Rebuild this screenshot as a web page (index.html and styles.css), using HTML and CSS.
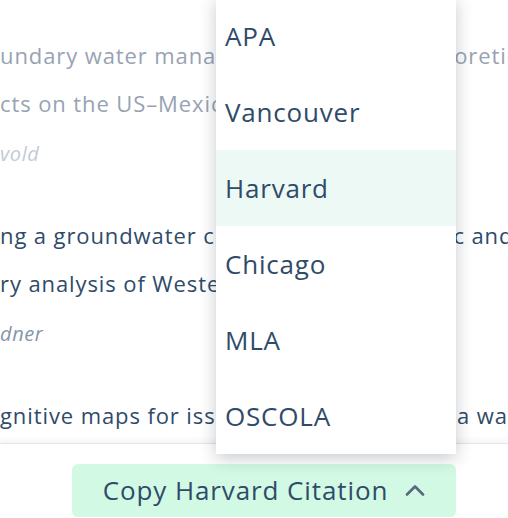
FILE: index.html
```html
<!DOCTYPE html>
<html lang="en">
<head>
<meta charset="utf-8">
<link rel="stylesheet" href="styles.css">
</head>
<body>
<div class="panel">
  <div class="results">
    <div class="entry entry-faded">
      <div class="line">undary water management: toward a theoretical</div>
      <div class="line">cts on the US–Mexico border</div>
      <div class="author">vold</div>
    </div>
    <div class="entry">
      <div class="line">ng a groundwater crisis: on hydrogeologic and</div>
      <div class="line">ry analysis of Western</div>
      <div class="author">dner</div>
    </div>
    <div class="entry">
      <div class="line">gnitive maps for issue framing in Bolivia: a water</div>
    </div>
  </div>
  <div class="footer">
    <div class="menu">
      <div class="option">APA</div>
      <div class="option">Vancouver</div>
      <div class="option option-active">Harvard</div>
      <div class="option">Chicago</div>
      <div class="option">MLA</div>
      <div class="option">OSCOLA</div>
    </div>
    <button class="copy-btn">
      <span>Copy Harvard Citation</span>
      <svg class="chev" width="20" height="12" viewBox="0 0 20 12"><path d="M2 10.5 L10 2.5 L18 10.5" fill="none" stroke="currentColor" stroke-width="2.6" stroke-linecap="round" stroke-linejoin="round"/></svg>
    </button>
  </div>
</div>
</body>
</html>
```

FILE: styles.css
```css
html, body {
  margin: 0;
  padding: 0;
  background: #ffffff;
}
body {
  width: 508px;
  height: 518px;
  overflow: hidden;
  font-family: "Open Sans", "Lato", sans-serif;
  color: #2f4b69;
}
.panel {
  display: flex;
  flex-direction: column;
  height: 518px;
}
.results {
  flex: 1;
  overflow: hidden;
  padding-top: 31px;
}
.entry {
  padding-bottom: 33px;
}
.line {
  font-size: 22px;
  letter-spacing: 0.9px;
  line-height: 48px;
  white-space: nowrap;
}
.author {
  font-size: 20px;
  font-style: italic;
  letter-spacing: 0.6px;
  line-height: 48px;
  margin-top: 3px;
  color: #8596aa;
}
.entry-faded .line {
  color: #97a3b3;
}
.entry-faded .author {
  color: #c3cbd5;
}
.footer {
  position: relative;
  flex: 0 0 75px;
  box-sizing: border-box;
  border-top: 1px solid #e3e7ec;
  box-shadow: 0 -3px 6px rgba(30, 40, 60, 0.05);
  padding: 20px 52px 0 0;
  display: flex;
  justify-content: flex-end;
  align-items: flex-start;
}
.copy-btn {
  width: 384px;
  height: 53px;
  border: none;
  border-radius: 6px;
  background: #d2f9e3;
  color: #2f4b69;
  font-family: inherit;
  font-size: 26px;
  letter-spacing: 0.9px;
  display: flex;
  align-items: center;
  justify-content: center;
  gap: 17px;
  padding: 0 0 2px 0;
}
.chev {
  color: #56697e;
}
.menu {
  position: absolute;
  right: 52px;
  bottom: 64px;
  width: 240px;
  background: #ffffff;
  box-shadow: 0 4px 16px rgba(20, 30, 45, 0.24);
}
.option {
  height: 76px;
  line-height: 76px;
  font-size: 26px;
  letter-spacing: 0.8px;
  padding-left: 9px;
  color: #2f4b69;
}
.option-active {
  background: #ecf9f4;
}
```
